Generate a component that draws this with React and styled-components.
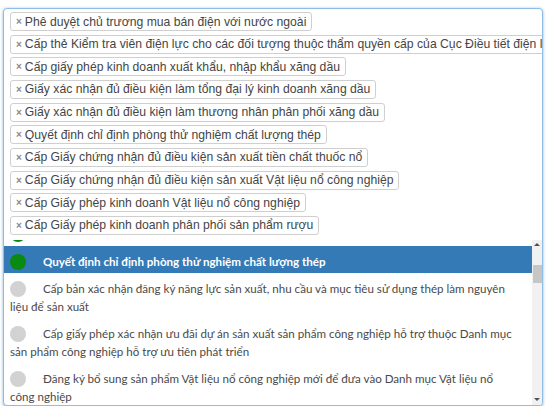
import React, { useLayoutEffect, useRef } from "react";
import styled, { createGlobalStyle } from "styled-components";

const GlobalStyle = createGlobalStyle`
  html, body { margin: 0; padding: 0; background: #fff; }
  body { font-family: "Liberation Sans", Arial, sans-serif; }
`;

const Wrapper = styled.div`
  margin: 8px 6px 0 3px;
  border: 1px solid #8fbde6;
  border-radius: 4px;
  background: #fff;
  overflow: hidden;
  box-shadow: 0 0 3px rgba(102, 175, 233, 0.55), 0 2px 3px rgba(0, 0, 0, 0.18);
`;

const Selection = styled.ul`
  list-style: none;
  margin: 0;
  padding: 3px 0 5px 6px;
  display: flex;
  flex-direction: column;
  align-items: flex-start;
  gap: 3.67px;
  overflow: hidden;
`;

const Tag = styled.li`
  display: inline-flex;
  align-items: center;
  flex-shrink: 0;
  gap: 3px;
  box-sizing: border-box;
  height: 19px;
  padding: 0 5px;
  border: 1px solid #cfcfcf;
  border-radius: 3px;
  background: #fff;
  color: #454545;
  font-size: 12.2px;
  white-space: nowrap;
`;

const Remove = styled.span`
  color: #8a8a8a;
  font-size: 10px;
  font-weight: bold;
`;

const Dropdown = styled.div`
  display: flex;
  height: 165px;
`;

const List = styled.ul`
  list-style: none;
  margin: 0;
  padding: 0;
  flex: 1;
  overflow: hidden;
  position: relative;
  font-family: Lato, "Open Sans", sans-serif;
  font-size: 11.6px;
  color: #4a4a4a;
`;

const Option = styled.li`
  padding: 7px 16px 3px 6px;
  line-height: 17.5px;
  background: ${(p) => (p.$active ? "#337ab7" : "transparent")};
  color: ${(p) => (p.$active ? "#fff" : "#4a4a4a")};
  font-weight: ${(p) => (p.$active ? 700 : 400)};
`;

const Dot = styled.span`
  display: inline-block;
  width: 16px;
  height: 16px;
  border-radius: 50%;
  vertical-align: -4px;
  margin-right: 17px;
  background: ${(p) => (p.$on ? "#0a8a12" : "#d2d2d2")};
`;

const Scrollbar = styled.div`
  width: 10px;
  display: flex;
  flex-direction: column;
  background: #f1f1f1;
`;

const Arrow = styled.div`
  height: 10px;
  display: flex;
  align-items: center;
  justify-content: center;
  &::before {
    content: "";
    width: 0;
    height: 0;
    border-left: 3px solid transparent;
    border-right: 3px solid transparent;
    ${(p) =>
      p.$down
        ? "border-top: 3px solid #505050;"
        : "border-bottom: 3px solid #505050;"}
  }
`;

const Track = styled.div`
  flex: 1;
  display: flex;
  flex-direction: column;
  align-items: center;
`;

const Thumb = styled.div`
  width: 9px;
  height: 18px;
  margin-top: ${(p) => p.$offset}px;
  background: #c6c6c6;
`;

const tags = [
  "Phê duyệt chủ trương mua bán điện với nước ngoài",
  "Cấp thẻ Kiểm tra viên điện lực cho các đối tượng thuộc thẩm quyền cấp của Cục Điều tiết điện lực",
  "Cấp giấy phép kinh doanh xuất khẩu, nhập khẩu xăng dầu",
  "Giấy xác nhận đủ điều kiện làm tổng đại lý kinh doanh xăng dầu",
  "Giấy xác nhận đủ điều kiện làm thương nhân phân phối xăng dầu",
  "Quyết định chỉ định phòng thử nghiệm chất lượng thép",
  "Cấp Giấy chứng nhận đủ điều kiện sản xuất tiền chất thuốc nổ",
  "Cấp Giấy chứng nhận đủ điều kiện sản xuất Vật liệu nổ công nghiệp",
  "Cấp Giấy phép kinh doanh Vật liệu nổ công nghiệp",
  "Cấp Giấy phép kinh doanh phân phối sản phẩm rượu",
];

const options = [
  { text: "Cấp Giấy phép kinh doanh phân phối sản phẩm rượu", on: true },
  { text: "Thẩm tra thiết kế lưới điện cao thế", on: true },
  { text: "Quyết định chỉ định phòng thử nghiệm chất lượng thép", on: true, active: true },
  {
    text: "Cấp bản xác nhận đăng ký năng lực sản xuất, nhu cầu và mục tiêu sử dụng thép làm nguyên liệu để sản xuất",
  },
  {
    text: "Cấp giấy phép xác nhận ưu đãi dự án sản xuất sản phẩm công nghiệp hỗ trợ thuộc Danh mục sản phẩm công nghiệp hỗ trợ ưu tiên phát triển",
  },
  {
    text: "Đăng ký bổ sung sản phẩm Vật liệu nổ công nghiệp mới để đưa vào Danh mục Vật liệu nổ công nghiệp",
  },
  { text: "Cấp Giấy chứng nhận đủ điều kiện sản xuất hóa chất" },
];

export default function App() {
  const listRef = useRef(null);
  const activeRef = useRef(null);

  useLayoutEffect(() => {
    if (listRef.current && activeRef.current) {
      listRef.current.scrollTop = activeRef.current.offsetTop - 6;
    }
  }, []);

  return (
    <>
      <GlobalStyle />
      <Wrapper>
        <Selection>
          {tags.map((t) => (
            <Tag key={t}>
              <Remove>×</Remove>
              {t}
            </Tag>
          ))}
        </Selection>
        <Dropdown>
          <List ref={listRef}>
            {options.map((o) => (
              <Option
                key={o.text}
                $active={o.active}
                ref={o.active ? activeRef : undefined}
              >
                <Dot $on={o.on} />
                {o.text}
              </Option>
            ))}
          </List>
          <Scrollbar>
            <Arrow />
            <Track>
              <Thumb $offset={15} />
            </Track>
            <Arrow $down />
          </Scrollbar>
        </Dropdown>
      </Wrapper>
    </>
  );
}
